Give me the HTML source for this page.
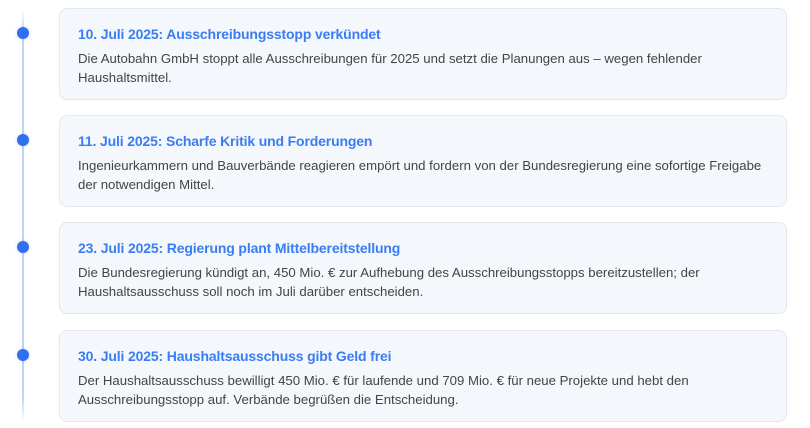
<!DOCTYPE html><html><head><meta charset="utf-8"><style>
body{margin:0;width:810px;height:428px;background:#fff;font-family:"Liberation Sans",sans-serif;position:relative;overflow:hidden}
.line{position:absolute;left:22px;top:8px;width:2px;height:414px;background:linear-gradient(#fff,#bcd6fb 6%,#bcd6fb 94%,#fff)}
.dot{position:absolute;left:17px;width:12px;height:12px;border-radius:50%;background:#2f6ff0;box-shadow:0 0 4px rgba(0,0,0,.15)}
.card{position:absolute;left:59px;width:728px;height:92px;box-sizing:border-box;background:#f4f7fb;border:1px solid #e3e8ee;border-radius:8px;padding:16px 18px 0 18px}
h3{margin:0 0 6px;font-size:14px;letter-spacing:-0.15px;font-weight:bold;color:#3a7df2;line-height:18px}
p{margin:0;font-size:13.2px;color:#444;line-height:19px}
</style></head><body>
<div class="line"></div>
<div class="dot" style="top:27px"></div><div class="dot" style="top:134px"></div><div class="dot" style="top:241px"></div><div class="dot" style="top:349px"></div>
<div class="card" style="top:8px"><h3>10. Juli 2025: Ausschreibungsstopp verkündet</h3><p>Die Autobahn GmbH stoppt alle Ausschreibungen für 2025 und setzt die Planungen aus – wegen fehlender<br>Haushaltsmittel.</p></div>
<div class="card" style="top:115px"><h3>11. Juli 2025: Scharfe Kritik und Forderungen</h3><p>Ingenieurkammern und Bauverbände reagieren empört und fordern von der Bundesregierung eine sofortige Freigabe<br>der notwendigen Mittel.</p></div>
<div class="card" style="top:222px"><h3>23. Juli 2025: Regierung plant Mittelbereitstellung</h3><p>Die Bundesregierung kündigt an, 450 Mio. € zur Aufhebung des Ausschreibungsstopps bereitzustellen; der<br>Haushaltsausschuss soll noch im Juli darüber entscheiden.</p></div>
<div class="card" style="top:330px"><h3>30. Juli 2025: Haushaltsausschuss gibt Geld frei</h3><p>Der Haushaltsausschuss bewilligt 450 Mio. € für laufende und 709 Mio. € für neue Projekte und hebt den<br>Ausschreibungsstopp auf. Verbände begrüßen die Entscheidung.</p></div>
</body></html>
